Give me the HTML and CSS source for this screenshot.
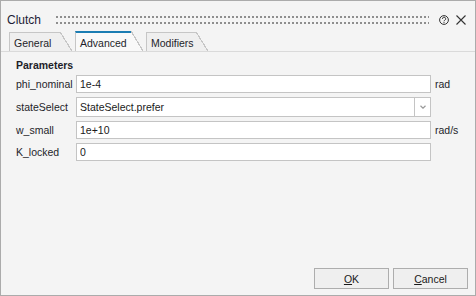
FILE: index.html
```html
<!DOCTYPE html>
<html lang="en">
<head>
    <meta charset="UTF-8">
    <title>Clutch</title>
    <link rel="stylesheet" href="styles.css">
</head>
<body>
  <div class="dialog">
    <div class="titlebar">
      <span class="title">Clutch</span>
      <span class="grip"></span>
      <svg class="help" width="10" height="10" viewBox="0 0 10 10">
        <circle cx="5" cy="5" r="4.4" fill="none" stroke="#333" stroke-width="1"/>
        <path d="M3.5 3.9 A1.6 1.6 0 1 1 5.8 5.2 C5.2 5.5 5 5.8 5 6.3" fill="none" stroke="#333" stroke-width="1"/>
        <circle cx="5" cy="7.6" r="0.6" fill="#333"/>
      </svg>
      <svg class="close" width="10" height="10" viewBox="0 0 10 10">
        <path d="M0.5 0.5 L9.5 9.5 M9.5 0.5 L0.5 9.5" stroke="#333" stroke-width="1.1"/>
      </svg>
    </div>

    <div class="tabs">
      <span class="tab tab-general">General</span>
      <span class="tab tab-advanced active">Advanced</span>
      <span class="tab tab-modifiers">Modifiers</span>
    </div>

    <div class="pane">
      <div class="group-title">Parameters</div>
      <div class="params">
        <label>phi_nominal</label>
        <input class="field" type="text" value="1e-4">
        <span class="unit">rad</span>

        <label>stateSelect</label>
        <div class="select">
          <span class="select-value">StateSelect.prefer</span>
          <span class="select-arrow">
            <svg width="6" height="4" viewBox="0 0 6 4"><path d="M0.5 0.8 L3 3.2 L5.5 0.8" fill="none" stroke="#9a9a9a" stroke-width="1.2"/></svg>
          </span>
        </div>
        <span class="unit"></span>

        <label>w_small</label>
        <input class="field" type="text" value="1e+10">
        <span class="unit">rad/s</span>

        <label>K_locked</label>
        <input class="field" type="text" value="0">
        <span class="unit"></span>
      </div>
    </div>

    <div class="buttons">
      <button class="btn"><u>O</u>K</button>
      <button class="btn"><u>C</u>ancel</button>
    </div>
  </div>
</body>
</html>
```

FILE: styles.css
```css
    body {
        margin: 0;
        background-color: #f4f4f4;
        font-family: 'Liberation Sans', Arial, sans-serif;
        font-size: 10.5px;
        color: #1e1e2a;
    }
    .dialog {
        width: 476px;
        height: 296px;
        box-sizing: border-box;
        border: 1px solid #ababab;
        background-color: #f4f4f4;
        display: flex;
        flex-direction: column;
    }

    /* title bar */
    .titlebar {
        height: 30px;
        box-sizing: border-box;
        padding: 7px 9px 0 6px;
        display: flex;
        align-items: center;
    }
    .title {
        font-size: 12px;
        color: #1c1c34;
    }
    .grip {
        flex: 1;
        height: 8px;
        margin-left: 15px;
        background:
            linear-gradient(to right, #8e8e8e 2px, transparent 2px) 0 0 / 4px 2px repeat-x,
            linear-gradient(to right, #8e8e8e 2px, transparent 2px) 0 6px / 4px 2px repeat-x;
    }
    .help {
        margin-left: 10px;
        display: block;
    }
    .close {
        margin-left: 7px;
        display: block;
    }

    /* tabs */
    .tabs {
        height: 20px;
        padding-left: 8px;
        display: flex;
        align-items: flex-end;
    }
    .tab {
        position: relative;
        height: 19px;
        box-sizing: border-box;
        padding: 4px 0 0 4px;
        margin-right: 15px;
        border-left: 1px solid #c6c6c6;
        border-top: 1px solid #c6c6c6;
        background-color: #efefef;
        white-space: nowrap;
    }
    .tab::after {
        content: "";
        position: absolute;
        left: 100%;
        top: -1px;
        width: 12px;
        height: calc(100% + 1px);
        background: linear-gradient(to top right, #efefef calc(50% - 0.6px), #c6c6c6 calc(50% - 0.6px), #c6c6c6 calc(50% + 0.6px), transparent calc(50% + 0.6px));
    }
    .tab-general { width: 51px; }
    .tab-advanced { width: 56px; }
    .tab-modifiers { width: 50px; }
    .tab.active {
        height: 20px;
        border-top: 2px solid #1b7db3;
        background-color: #f9f9f9;
    }
    .tab.active::after {
        top: -2px;
        height: calc(100% + 2px);
        background: linear-gradient(to top right, #f9f9f9 calc(50% - 0.6px), #c6c6c6 calc(50% - 0.6px), #c6c6c6 calc(50% + 0.6px), transparent calc(50% + 0.6px));
    }

    /* parameters pane */
    .pane {
        flex: 1;
        border-top: 1px solid #dadada;
        padding: 7px 15px 0;
    }
    .group-title {
        font-weight: bold;
        margin-bottom: 4px;
    }
    .params {
        display: grid;
        grid-template-columns: 60px 355px auto;
        row-gap: 4px;
        align-items: center;
    }
    .field {
        height: 18px;
        box-sizing: border-box;
        margin: 0;
        border: 1px solid #c4c4c4;
        border-radius: 0;
        padding: 0 3px;
        background-color: #fff;
        font-family: inherit;
        font-size: 10.5px;
        color: #1a1a1a;
        outline: none;
    }
    .unit {
        margin-left: 4px;
    }
    .select {
        height: 20px;
        box-sizing: border-box;
        border: 1px solid #c4c4c4;
        background-color: #fff;
        display: flex;
        align-items: center;
    }
    .select-value {
        flex: 1;
        padding-left: 3px;
        color: #1a1a1a;
    }
    .select-arrow {
        width: 15px;
        height: 18px;
        border-left: 1px solid #c4c4c4;
        display: flex;
        align-items: center;
        justify-content: center;
    }

    /* dialog buttons */
    .buttons {
        display: flex;
        justify-content: flex-end;
        gap: 4px;
        padding: 0 7px 6px;
    }
    .btn {
        width: 75px;
        height: 21px;
        margin: 0;
        border: 1px solid #adadad;
        border-radius: 0;
        background-color: #efefef;
        font-family: inherit;
        font-size: 10.5px;
        color: #1a1a1a;
        padding: 0;
    }
```
